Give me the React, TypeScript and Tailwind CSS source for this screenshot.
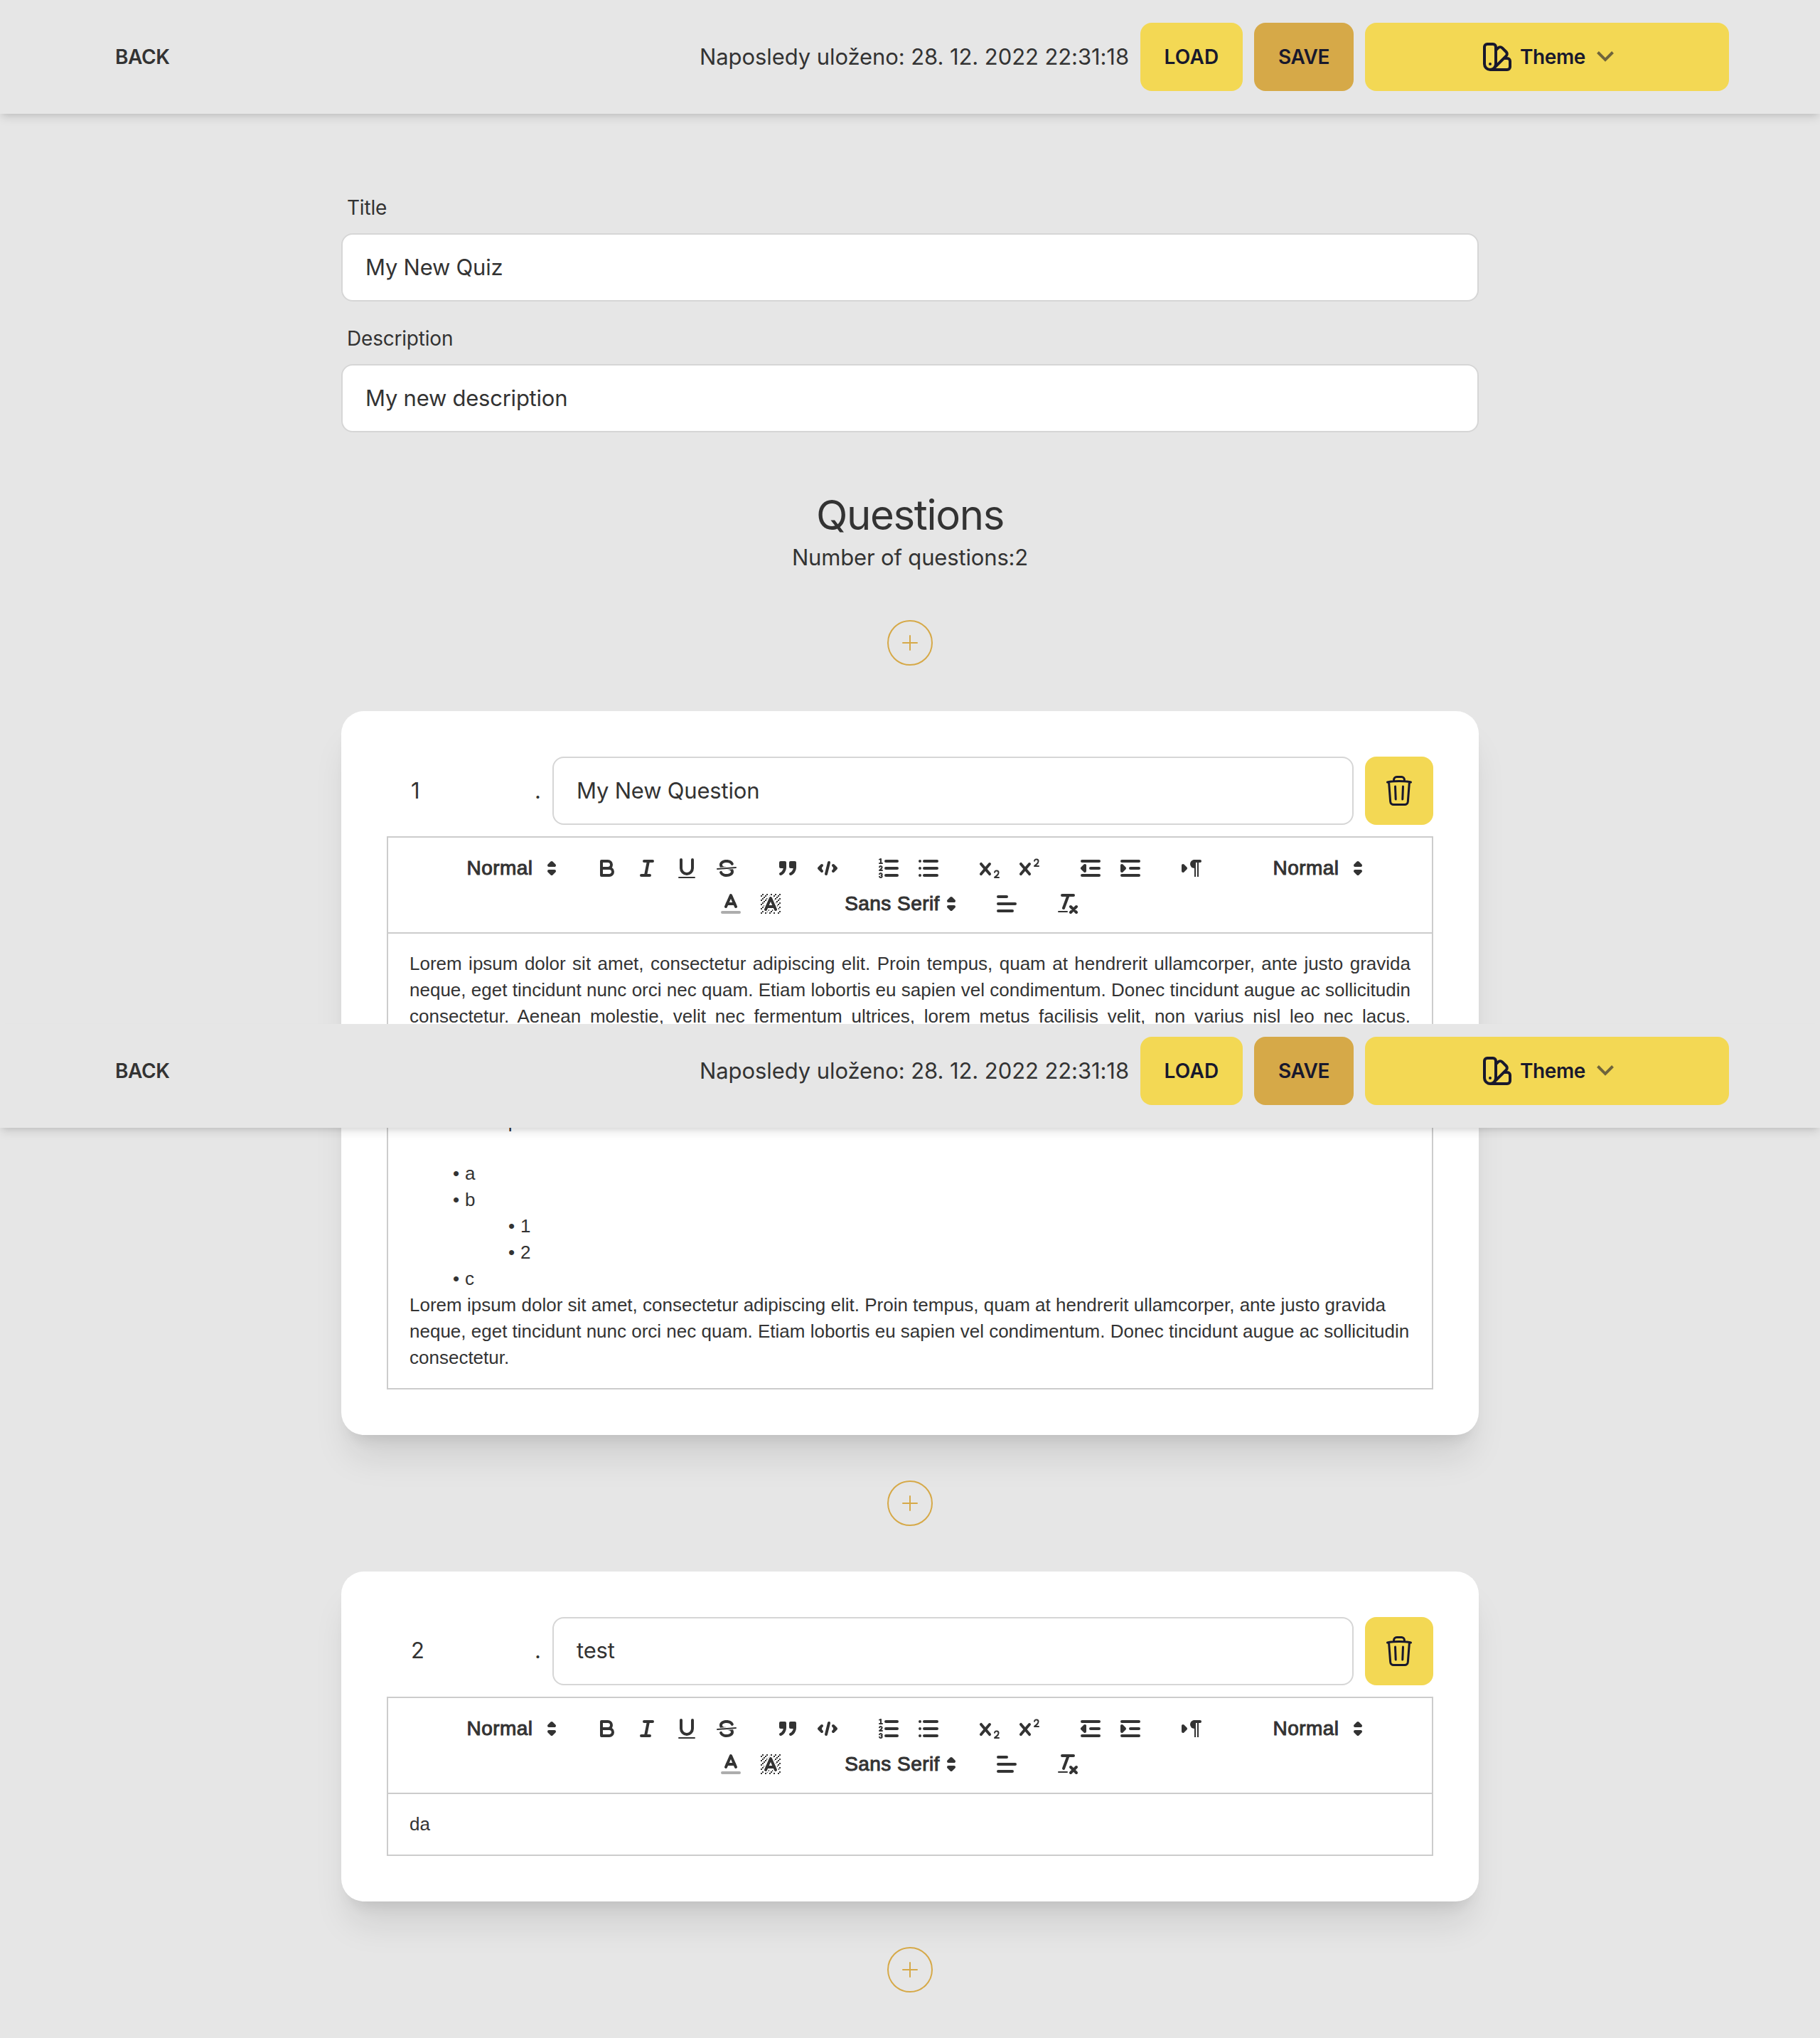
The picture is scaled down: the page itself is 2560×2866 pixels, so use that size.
import React from 'react';
import type { ReactNode } from 'react';

const S = 'fill-none stroke-[#333] stroke-2 [stroke-linecap:round] [stroke-linejoin:round]';
const THIN = 'fill-none stroke-[#333] stroke-1 [stroke-linecap:round] [stroke-linejoin:round]';
const F = 'fill-[#333]';
const FS = 'fill-[#333] stroke-[#333] stroke-2 [stroke-linecap:round] [stroke-linejoin:round] [fill-rule:evenodd]';

const SUB_X =
  'M9.65,5.241a1,1,0,0,0-1.409.108L6,7.964,3.759,5.349A1,1,0,0,0,2.192,6.59178Q2.21541,6.6213,2.241,6.649L4.684,9.5,2.241,12.35A1,1,0,0,0,3.71,13.70722q0.02557-.02768.049-0.05722L6,11.036,8.241,13.65a1,1,0,1,0,1.567-1.24277Q9.78459,12.3777,9.759,12.35L7.316,9.5,9.759,6.651A1,1,0,0,0,9.65,5.241Z';

const HATCH: [number, number][] = [
  [4, 4], [2, 6], [3, 5], [4, 7], [2, 12], [2, 9], [2, 15], [3, 8], [12, 2], [11, 3], [2, 3], [6, 2], [3, 2], [5, 3],
  [9, 2], [15, 14], [13, 7], [15, 5], [14, 6], [15, 8], [14, 9], [14, 3], [15, 2], [12, 5], [13, 4], [9, 14], [8, 15],
  [5, 15], [11, 15], [14, 15], [15, 11],
];

function IconButton({ children }: { children: ReactNode }) {
  return (
    <span className="flex h-12 w-14 items-center justify-center">
      <svg viewBox="0 0 18 18" className="size-9">{children}</svg>
    </span>
  );
}

function Group({ children }: { children: ReactNode }) {
  return <span className="mr-[30px] flex items-center">{children}</span>;
}

function Picker({ label, width }: { label: string; width: string }) {
  return (
    <span className={`flex h-12 items-center pl-[18px] ${width}`}>
      <span className="flex-1 text-center font-['Liberation_Sans',Arial,sans-serif] text-[28px] leading-[48px] tracking-[0.45px] [-webkit-text-stroke:1px_#333]">
        {label}
      </span>
      <svg viewBox="0 0 18 18" className="-ml-[30px] mr-0.5 size-9">
        <polygon className={S} points="7 11 9 13 11 11 7 11" />
        <polygon className={S} points="7 7 9 5 11 7 7 7" />
      </svg>
    </span>
  );
}

function Toolbar() {
  return (
    <div className="flex h-[137px] flex-col items-center border-2 border-[#ccc] pt-[18px]">
      <div className="flex h-[50px] items-center">
        <Group><Picker label="Normal" width="w-[196px]" /></Group>
        <Group>
          <IconButton>
            <path className={S} d="M5,4H9.5A2.5,2.5,0,0,1,12,6.5v0A2.5,2.5,0,0,1,9.5,9H5A0,0,0,0,1,5,9V4A0,0,0,0,1,5,4Z" />
            <path className={S} d="M5,9h5.5A2.5,2.5,0,0,1,13,11.5v0A2.5,2.5,0,0,1,10.5,14H5a0,0,0,0,1,0,0V9A0,0,0,0,1,5,9Z" />
          </IconButton>
          <IconButton>
            <path className={S} d="M7,4H13M5,14H11M8,14L10,4" />
          </IconButton>
          <IconButton>
            <path className={S} d="M5,3V9a4.012,4.012,0,0,0,4,4H9a4.012,4.012,0,0,0,4-4V3" />
            <rect className={F} height="1" rx="0.5" width="12" x="3" y="15" />
          </IconButton>
          <IconButton>
            <path className={THIN} d="M15.5,8.5L2.5,9.5" />
            <path className={F} d="M9.007,8C6.542,7.791,6,7.519,6,6.5,6,5.792,7.283,5,9,5c1.571,0,2.765.679,2.969,1.309a1,1,0,0,0,1.9-.617C13.356,4.106,11.354,3,9,3,6.2,3,4,4.538,4,6.5a3.2,3.2,0,0,0,.5,1.843Z" />
            <path className={F} d="M8.984,10C11.457,10.208,12,10.479,12,11.5c0,.708-1.283,1.5-3,1.5-1.571,0-2.765-.679-2.969-1.309a1,1,0,1,0-1.9.617C4.644,13.894,6.646,15,9,15c2.8,0,5-1.538,5-3.5a3.2,3.2,0,0,0-.5-1.843Z" />
          </IconButton>
        </Group>
        <Group>
          <IconButton>
            <rect className={FS} height="3" width="3" x="4" y="5" />
            <rect className={FS} height="3" width="3" x="11" y="5" />
            <path className={FS} d="M7,8c0,4.031-3,5-3,5" />
            <path className={FS} d="M14,8c0,4.031-3,5-3,5" />
          </IconButton>
          <IconButton>
            <polyline className={FS} points="5 7 3 9 5 11" />
            <polyline className={FS} points="13 7 15 9 13 11" />
            <path className={S} d="M10,5L8,13" />
          </IconButton>
        </Group>
        <Group>
          <IconButton>
            <path className={S} d="M7,4H15M7,9H15M7,14H15" />
            <path className={THIN} d="M2.5,5.5H4.5" />
            <path className={F} d="M3.5,6A0.5,0.5,0,0,1,3,5.5V3.085l-0.276.138A0.5,0.5,0,0,1,2.053,3c-0.124-.247-0.023-0.324.224-0.447l1-.5A0.5,0.5,0,0,1,4,2.5v3A0.5,0.5,0,0,1,3.5,6Z" />
            <path className={THIN} d="M4.5,10.5h-2c0-.234,1.85-1.076,1.85-2.234A0.959,0.959,0,0,0,2.5,8.156" />
            <path className={THIN} d="M2.5,14.846a0.959,0.959,0,0,0,1.85-.109A0.7,0.7,0,0,0,3.75,14a0.688,0.688,0,0,0,.6-0.736,0.959,0.959,0,0,0-1.85-.109" />
          </IconButton>
          <IconButton>
            <path className={S} d="M6,4H15M6,9H15M6,14H15M3,4H3M3,9H3M3,14H3" />
          </IconButton>
        </Group>
        <Group>
          <IconButton>
            <path className={F} d="M15.5,15H13.861a3.858,3.858,0,0,0,1.914-2.975,1.8,1.8,0,0,0-1.6-1.751A1.921,1.921,0,0,0,12.021,11.7a0.50013,0.50013,0,1,0,.957.291h0a0.914,0.914,0,0,1,1.053-.725,0.81,0.81,0,0,1,.744.762c0,1.076-1.16971,1.86982-1.93971,2.43082A1.45639,1.45639,0,0,0,12,15.5a0.5,0.5,0,0,0,.5.5h3A0.5,0.5,0,0,0,15.5,15Z" />
            <path className={F} d={SUB_X} />
          </IconButton>
          <IconButton>
            <path className={F} d="M15.5,7H13.861a4.015,4.015,0,0,0,1.914-2.975,1.8,1.8,0,0,0-1.6-1.751A1.922,1.922,0,0,0,12.021,3.7a0.5,0.5,0,1,0,.957.291,0.917,0.917,0,0,1,1.053-.725,0.81,0.81,0,0,1,.744.762c0,1.077-1.164,1.925-1.934,2.486A1.423,1.423,0,0,0,12,7.5a0.5,0.5,0,0,0,.5.5h3A0.5,0.5,0,0,0,15.5,7Z" />
            <path className={F} d={SUB_X} />
          </IconButton>
        </Group>
        <Group>
          <IconButton>
            <path className={S} d="M3,14H15M3,4H15M9,9H15" />
            <polyline className={FS} points="5 7 5 11 3 9 5 7" />
          </IconButton>
          <IconButton>
            <path className={S} d="M3,14H15M3,4H15M9,9H15" />
            <polyline className={FS} points="3 7 3 11 5 9 3 7" />
          </IconButton>
        </Group>
        <Group>
          <IconButton>
            <polygon className={FS} points="3 11 5 9 3 7 3 11" />
            <path className={S} d="M15,4H11" />
            <path className={F} d="M11,3a3,3,0,0,0,0,6h1V3H11Z" />
            <rect className={F} height="11" width="1" x="11" y="4" />
            <rect className={F} height="11" width="1" x="13" y="4" />
          </IconButton>
        </Group>
        <Group><Picker label="Normal" width="w-[196px]" /></Group>
      </div>
      <div className="flex h-[50px] items-center">
        <Group>
          <IconButton>
            <path className={`${S} opacity-40`} d="M3,15H15" />
            <polyline className={S} points="5.5 11 9 3 12.5 11" />
            <path className={S} d="M11.63,9H6.38" />
          </IconButton>
          <IconButton>
            <g className={F}>
              {HATCH.map(([x, y]) => (
                <rect key={`${x}-${y}`} x={x} y={y} width="1" height="1" />
              ))}
              <polygon points="6 6.868 6 6 5 6 5 7 5.942 7 6 6.868" />
              <polygon points="6.817 5 6 5 6 6 6.38 6 6.817 5" />
              <polygon points="4 11.439 4 11 3 11 3 12 3.755 12 4 11.439" />
              <polygon points="4.63 10 4 10 4 11 4.192 11 4.63 10" />
              <path d="M10.832,4.2L11,4.582V4H10.708A1.948,1.948,0,0,1,10.832,4.2Z" />
              <path d="M7,4.582L7.168,4.2A1.929,1.929,0,0,1,7.292,4H7V4.582Z" />
              <path d="M8,13H7.683l-0.351.8a1.933,1.933,0,0,1-.124.2H8V13Z" />
              <path d="M9,3H8V3.282A1.985,1.985,0,0,1,9,3Z" />
              <polygon points="13.447 10.174 13.469 10.225 13.472 10.232 13.808 11 14 11 14 10 13.37 10 13.447 10.174" />
              <path d="M3.775,14H3v1H4V14.314A1.97,1.97,0,0,1,3.775,14Z" />
              <polygon points="12 6.868 12 6 11.62 6 12 6.868" />
              <polygon points="12.933 9 13 9 13 8 12.495 8 12.933 9" />
              <path d="M6,14.926V15H7V14.316A1.993,1.993,0,0,1,6,14.926Z" />
              <path d="M10.668,13.8L10.317,13H10v1h0.792A1.947,1.947,0,0,1,10.668,13.8Z" />
              <path d="M14.332,12.2a1.99,1.99,0,0,1,.166.8H15V12H14.245Z" />
            </g>
            <polyline className={S} points="5.5 13 9 5 12.5 13" />
            <path className={S} d="M11.63,11H6.38" />
          </IconButton>
        </Group>
        <Group><Picker label="Sans Serif" width="w-[216px]" /></Group>
        <Group>
          <IconButton>
            <path className={S} d="M3,9H15M3,14H13M3,4H9" />
          </IconButton>
        </Group>
        <Group>
          <IconButton>
            <path className={S} d="M5,3H13M6,12L9.35,3M11,11L15,15M15,11L11,15" />
            <rect className={F} height="1" rx="0.5" width="7" x="2" y="14" />
          </IconButton>
        </Group>
      </div>
    </div>
  );
}

function HeaderContent() {
  return (
    <>
      <button className="px-[34px] text-[28px] font-semibold leading-10 tracking-[-0.4px]">BACK</button>
      <div className="flex items-center gap-4">
        <span className="text-[31px] leading-[48px] tracking-[-0.08px]">Naposledy uloženo: 28. 12. 2022 22:31:18</span>
        <button className="h-24 w-36 rounded-2xl bg-[#f3d854] text-[28px] font-semibold tracking-[0.3px] text-[#18182d]">LOAD</button>
        <button className="h-24 w-[140px] rounded-2xl bg-[#d6a948] text-[28px] font-semibold tracking-[-0.4px] text-[#18182d]">SAVE</button>
        <button className="flex h-24 w-[512px] items-center justify-center rounded-2xl bg-[#f3d854] text-[28px] font-semibold tracking-[-0.4px] text-[#18182d]">
          <svg viewBox="0 0 24 24" fill="none" stroke="currentColor" strokeWidth="2" strokeLinecap="round" strokeLinejoin="round" className="mr-2 size-12">
            <path d="M7 21a4 4 0 01-4-4V5a2 2 0 012-2h4a2 2 0 012 2v12a4 4 0 01-4 4zm0 0h12a2 2 0 002-2v-4a2 2 0 00-2-2h-2.343M11 7.343l1.657-1.657a2 2 0 012.828 0l2.829 2.829a2 2 0 010 2.828l-8.486 8.485M7 17h.01" />
          </svg>
          <span>Theme</span>
          <svg viewBox="0 0 2048 2048" className="ml-4 size-6 fill-current opacity-60">
            <path d="M1799 349l242 241-1017 1017L7 590l242-241 775 775 775-775z" />
          </svg>
        </button>
      </div>
    </>
  );
}

const HEADER_SHADOW = 'shadow-[0_8px_12px_-2px_rgba(0,0,0,0.1),0_4px_8px_-4px_rgba(0,0,0,0.1)]';

function Field({ label, value }: { label: string; value: string }) {
  return (
    <div>
      <div className="px-2 py-4 text-[28px] leading-10 tracking-[-0.2px]">{label}</div>
      <div className="flex h-24 items-center rounded-2xl border-2 border-[#d6d6d6] bg-white px-8 text-[31px] tracking-[-0.24px]">{value}</div>
    </div>
  );
}

function AddButton() {
  return (
    <button className="mx-auto my-16 flex size-16 items-center justify-center rounded-full border-2 border-[#d6a948]">
      <svg viewBox="0 0 22 22" className="size-[22px] fill-none stroke-[#d6a948] stroke-2 [stroke-linecap:round]">
        <path d="M11 1V21M1 11H21" />
      </svg>
    </button>
  );
}

function QuestionCard({ number, title, children }: { number: number; title: string; children: ReactNode }) {
  return (
    <section className="rounded-[32px] bg-white p-16 shadow-[0_40px_50px_-10px_rgba(0,0,0,0.1),0_16px_20px_-12px_rgba(0,0,0,0.1)]">
      <div className="mb-4 flex h-24 items-center text-[31px]">
        <span className="w-52 pl-[34px]">{number}</span>
        <span className="w-[9px]">.</span>
        <div className="mx-4 flex h-24 flex-1 items-center rounded-2xl border-2 border-[#d6d6d6] px-8 tracking-[-0.2px]">{title}</div>
        <button className="flex size-24 items-center justify-center rounded-2xl bg-[#f3d854] text-[#18182d]">
          <svg viewBox="0 0 24 24" fill="none" stroke="currentColor" strokeWidth="1.5" strokeLinecap="round" strokeLinejoin="round" className="size-12">
            <path d="M14.74 9l-.346 9m-4.788 0L9.26 9m9.968-3.21c.342.052.682.107 1.022.166m-1.022-.165L18.16 19.673a2.25 2.25 0 01-2.244 2.077H8.084a2.25 2.25 0 01-2.244-2.077L4.772 5.79m14.456 0a48.108 48.108 0 00-3.478-.397m-12 .562c.34-.059.68-.114 1.022-.165m0 0a48.11 48.11 0 013.478-.397m7.5 0v-.916c0-1.18-.91-2.164-2.09-2.201a51.964 51.964 0 00-3.32 0c-1.18.037-2.09 1.022-2.09 2.201v.916m7.5 0a48.667 48.667 0 00-7.5 0" />
          </svg>
        </button>
      </div>
      <Toolbar />
      <div className="border-2 border-t-0 border-[#ccc] px-[30px] py-6 font-['Liberation_Sans',Arial,sans-serif] text-[26px] leading-[36.92px]">
        {children}
      </div>
    </section>
  );
}

const JUSTIFIED = [
  'Lorem ipsum dolor sit amet, consectetur adipiscing elit. Proin tempus, quam at hendrerit ullamcorper, ante justo gravida',
  'neque, eget tincidunt nunc orci nec quam. Etiam lobortis eu sapien vel condimentum. Donec tincidunt augue ac sollicitudin',
  'consectetur. Aenean molestie, velit nec fermentum ultrices, lorem metus facilisis velit, non varius nisl leo nec lacus.',
];

function Bullet({ nested, children }: { nested?: boolean; children: ReactNode }) {
  return (
    <li className={nested ? 'flex pl-[117px]' : 'flex pl-[39px]'}>
      <span className="mr-[7.8px] w-[31.2px] text-right">•</span>
      <span>{children}</span>
    </li>
  );
}

export default function App() {
  return (
    <div className="relative h-[2866px] overflow-hidden bg-[#e6e6e6] font-['Inter',sans-serif] text-[#333]">
      <header className={`flex h-40 items-center justify-between px-32 ${HEADER_SHADOW}`}>
        <HeaderContent />
      </header>

      <main className="mx-auto w-[1600px] pt-24">
        <div className="flex flex-col gap-4">
          <Field label="Title" value="My New Quiz" />
          <Field label="Description" value="My new description" />
        </div>
        <div className="mt-20 text-center">
          <h1 className="text-[58px] leading-[72px] tracking-[-1.3px]">Questions</h1>
          <p className="text-[31px] leading-[48px] tracking-[-0.16px]">Number of questions:2</p>
        </div>
        <AddButton />
        <QuestionCard number={1} title="My New Question">
          {JUSTIFIED.map((line) => (
            <div key={line} className="whitespace-nowrap text-justify [text-align-last:justify]">{line}</div>
          ))}
          <p className="mt-[110.76px]">elit sit amet porttitor.</p>
          <p>&nbsp;</p>
          <ul>
            <Bullet>a</Bullet>
            <Bullet>b</Bullet>
            <Bullet nested>1</Bullet>
            <Bullet nested>2</Bullet>
            <Bullet>c</Bullet>
          </ul>
          <p>
            Lorem ipsum dolor sit amet, consectetur adipiscing elit. Proin tempus, quam at hendrerit ullamcorper, ante justo
            gravida neque, eget tincidunt nunc orci nec quam. Etiam lobortis eu sapien vel condimentum. Donec tincidunt augue
            ac sollicitudin consectetur.
          </p>
        </QuestionCard>
        <AddButton />
        <QuestionCard number={2} title="test">
          <p>da</p>
        </QuestionCard>
        <AddButton />
      </main>

      <header className={`absolute inset-x-0 top-[1440px] flex h-[146px] items-start justify-between bg-[#e6e6e6] px-32 pt-[18px] ${HEADER_SHADOW}`}>
        <div className="flex h-24 w-full items-center justify-between">
          <HeaderContent />
        </div>
      </header>
    </div>
  );
}
